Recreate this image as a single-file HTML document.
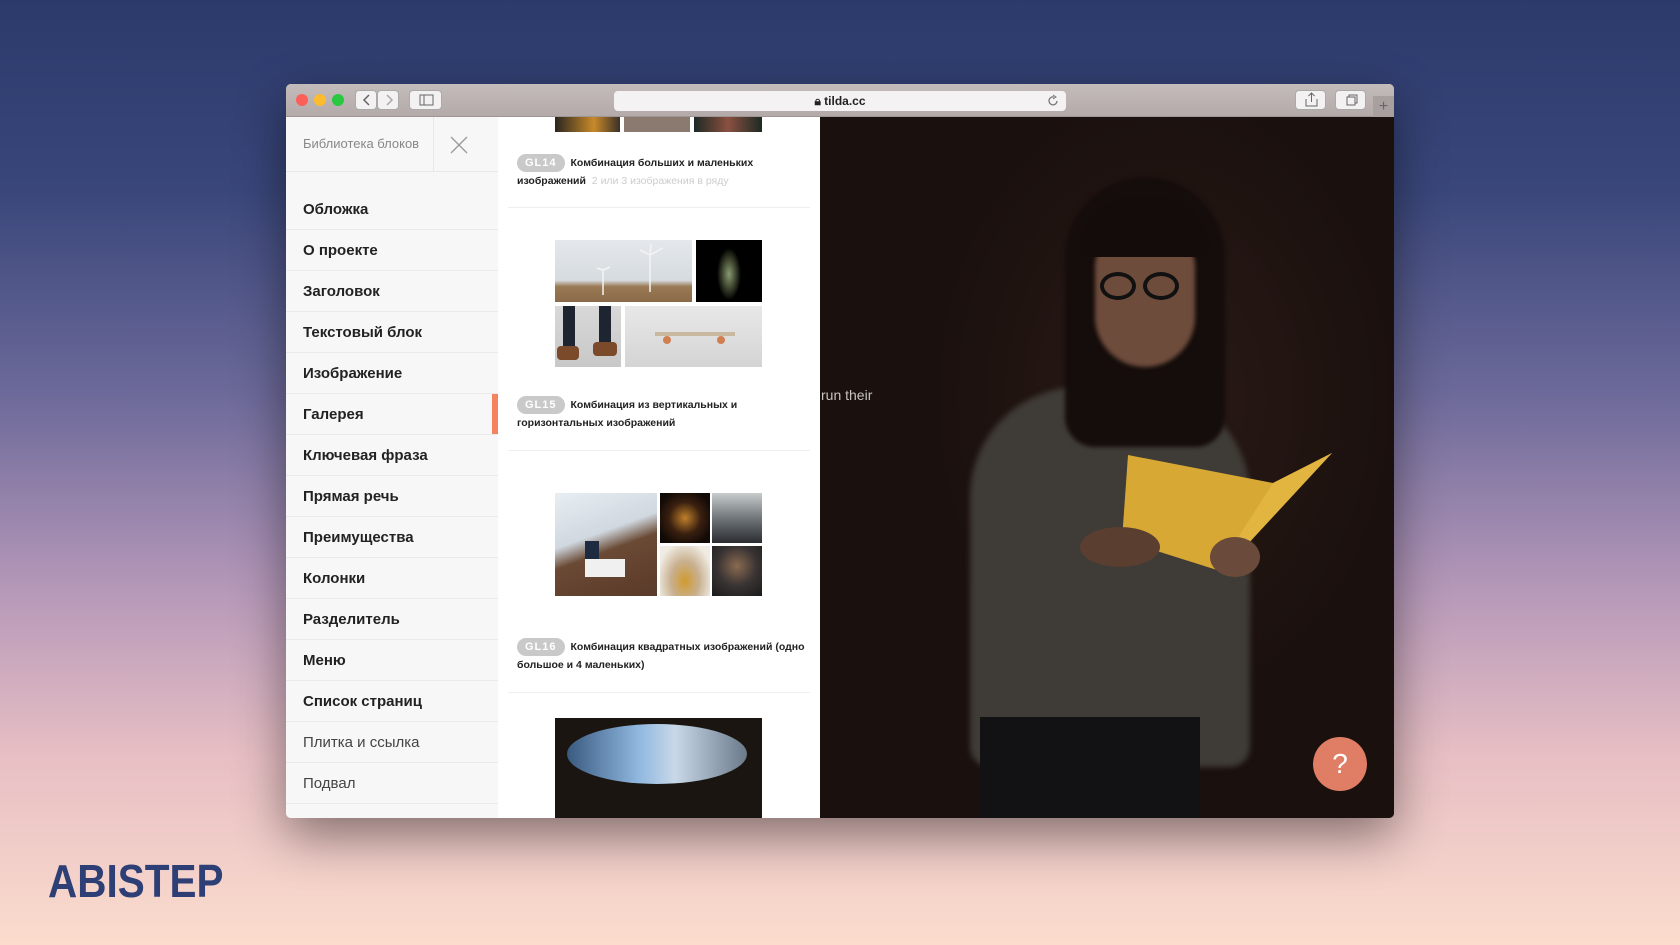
<!DOCTYPE html>
<html><head><meta charset="utf-8"><style>
*{margin:0;padding:0;box-sizing:border-box}
body{width:1680px;height:945px;overflow:hidden;position:relative;font-family:"Liberation Sans","DejaVu Sans",sans-serif;
background:linear-gradient(180deg,#2b3a6b 0%,#39467a 20%,#6d6a9a 42%,#b497b8 62%,#e7bfc4 80%,#fbdccd 100%)}
.win{position:absolute;left:286px;top:84px;width:1108px;height:734px;border-radius:5px;overflow:hidden;box-shadow:0 18px 50px rgba(0,0,0,.45);background:#fff}
.bar{position:absolute;left:0;top:0;width:1108px;height:33px;background:linear-gradient(#c4bcbb,#b3aaa9);border-bottom:1px solid #9e9695}
.dot{position:absolute;top:10px;width:12px;height:12px;border-radius:50%}
.btn{position:absolute;top:6px;height:20px;background:#f3f1f1;border-radius:4px;border:1px solid #aaa}
.url{position:absolute;left:328px;top:7px;width:452px;height:20px;background:#f4f2f2;border-radius:4px;font-size:12px;text-align:center;line-height:20px;color:#222;font-weight:bold}
.side{position:absolute;left:0;top:33px;width:212px;height:701px;background:#f7f7f7}
.sh{height:55px;border-bottom:1px solid #e8e8e8;position:relative}
.sh span{position:absolute;left:17px;top:19px;font-size:13px;color:#888}
.sh i{position:absolute;left:147px;top:0;width:1px;height:55px;background:#e8e8e8}
.menu{position:absolute;left:0;top:72px;width:212px}
.mi{height:41px;border-bottom:1px solid #eaeaea;padding-left:17px;line-height:41px;font-size:15px;font-weight:bold;color:#222;position:relative}
.mi.n{font-weight:normal;color:#444}
.mid{position:absolute;left:213px;top:33px;width:321px;height:701px;background:#fff;overflow:hidden}
.cap{position:absolute;left:18px;font-size:10.5px;font-weight:bold;color:#222;line-height:18px;width:292px}
.bd{display:inline-block;background:#c9c9c9;color:#fff;border-radius:9px;padding:0 8px;margin-right:6px;font-size:11px;letter-spacing:1px}
.hr{position:absolute;left:9px;width:302px;height:1px;background:#eee}
.im{position:absolute}
.right{position:absolute;left:534px;top:33px;width:574px;height:701px;background:#1d1210;overflow:hidden}
.logo{position:absolute;left:48px;top:856px;font-size:46px;line-height:50px;font-weight:bold;color:#2e3f75;font-family:"Liberation Sans",sans-serif;transform:scaleX(0.88);transform-origin:left top}
</style></head><body>
<div class="win">
 <div class="bar">
  <div class="dot" style="left:10px;background:#fc5f57"></div>
  <div class="dot" style="left:28px;background:#fdbc2e"></div>
  <div class="dot" style="left:46px;background:#28c840"></div>
  <div class="btn" style="left:69px;width:22px"><svg width="22" height="18"><path d="M13 4 L8 9 L13 14" stroke="#666" fill="none" stroke-width="1.5"/></svg></div>
  <div class="btn" style="left:91px;width:22px"><svg width="22" height="18"><path d="M9 4 L14 9 L9 14" stroke="#aaa" fill="none" stroke-width="1.5"/></svg></div>
  <div class="btn" style="left:123px;width:33px"><svg width="33" height="18"><rect x="10" y="4" width="13" height="10" fill="none" stroke="#666"/><line x1="14" y1="4" x2="14" y2="14" stroke="#666"/></svg></div>
  <div class="url">🔒︎ tilda.cc<svg style="position:absolute;right:6px;top:3px" width="14" height="14"><path d="M11 7 A4 4 0 1 1 8 3" stroke="#777" fill="none" stroke-width="1.3"/><path d="M7 1 L10 3 L7 5" stroke="#777" fill="none"/></svg></div>
  <div class="btn" style="left:1009px;width:31px"><svg width="31" height="18"><path d="M10 8 V15 H21 V8 M15.5 2 V11 M12.5 5 L15.5 2 L18.5 5" stroke="#666" fill="none"/></svg></div>
  <div class="btn" style="left:1049px;width:31px"><svg width="31" height="18"><rect x="11" y="6" width="8" height="8" fill="none" stroke="#666"/><path d="M13 6 V4 H21 V12 H19" stroke="#666" fill="none"/></svg></div>
  <div style="position:absolute;left:1087px;top:12px;width:21px;height:21px;background:#a8a09f;color:#666;font-size:16px;text-align:center;line-height:21px">+</div>
 </div>
 <div class="side">
  <div class="sh"><span>Библиотека блоков</span><i></i>
   <svg style="position:absolute;left:163px;top:18px" width="20" height="20"><path d="M2 2 L18 18 M18 2 L2 18" stroke="#999" stroke-width="1.3"/></svg></div>
  <div class="menu">
   <div class="mi">Обложка</div><div class="mi">О проекте</div><div class="mi">Заголовок</div><div class="mi">Текстовый блок</div><div class="mi">Изображение</div>
   <div class="mi">Галерея<span style="position:absolute;right:0;top:0;width:6px;height:40px;background:#f4845f"></span></div>
   <div class="mi">Ключевая фраза</div><div class="mi">Прямая речь</div><div class="mi">Преимущества</div><div class="mi">Колонки</div><div class="mi">Разделитель</div><div class="mi">Меню</div><div class="mi">Список страниц</div>
   <div class="mi n">Плитка и ссылка</div><div class="mi n">Подвал</div><div class="mi n">В</div>
  </div>
 </div>
 <div class="mid">
  <div class="im" style="left:56px;top:0;width:65px;height:15px;background:linear-gradient(90deg,#2a2520,#c88a2a 60%,#3a3028)"></div>
  <div class="im" style="left:125px;top:0;width:66px;height:15px;background:#8a7a70"></div>
  <div class="im" style="left:195px;top:0;width:68px;height:15px;background:linear-gradient(90deg,#1d2a24,#8a5040,#1d2a24)"></div>
  <div class="cap" style="top:37px"><span class="bd">GL14</span>Комбинация больших и маленьких изображений <span style="font-weight:normal;color:#ccc">&nbsp;2 или 3 изображения в ряду</span></div>
  <div class="hr" style="top:90px"></div>
  <div class="im" style="left:56px;top:123px;width:137px;height:62px;background:linear-gradient(180deg,#e4e8ec 0%,#d6dbe0 65%,#9a7a55 75%,#8a6a48 100%)"><svg width="137" height="62"><path d="M95 15 V52 M95 15 L108 8 M95 15 L85 10 M95 15 L96 4 M48 30 V55 M48 30 L55 27 M48 30 L42 28" stroke="#f4f4f4" stroke-width="1.5" fill="none"/></svg></div>
  <div class="im" style="left:197px;top:123px;width:66px;height:62px;background:radial-gradient(ellipse 12px 26px at 50% 55%,#8a9a70,#2a3020 70%,#000 100%)"></div>
  <div class="im" style="left:56px;top:189px;width:66px;height:61px;background:linear-gradient(180deg,#d8d8d8,#c8c8c8);"><div style="position:absolute;left:8px;top:0;width:12px;height:40px;background:#1e2430"></div><div style="position:absolute;left:44px;top:0;width:12px;height:36px;background:#1e2430"></div><div style="position:absolute;left:2px;top:40px;width:22px;height:14px;background:#7a4a2a;border-radius:4px"></div><div style="position:absolute;left:38px;top:36px;width:24px;height:14px;background:#7a4a2a;border-radius:4px"></div></div>
  <div class="im" style="left:126px;top:189px;width:137px;height:61px;background:linear-gradient(180deg,#e8e8e8,#d4d4d4)"><div style="position:absolute;left:30px;top:26px;width:80px;height:4px;background:#c8b8a0"></div><div style="position:absolute;left:38px;top:30px;width:8px;height:8px;border-radius:50%;background:#d08050"></div><div style="position:absolute;left:92px;top:30px;width:8px;height:8px;border-radius:50%;background:#d08050"></div></div>
  <div class="cap" style="top:279px"><span class="bd">GL15</span>Комбинация из вертикальных и горизонтальных изображений</div>
  <div class="hr" style="top:333px"></div>
  <div class="im" style="left:56px;top:376px;width:102px;height:103px;background:linear-gradient(160deg,#e8eef2 0%,#d0d8e0 40%,#6a4a35 55%,#5a3a28 100%)"><div style="position:absolute;left:30px;top:48px;width:14px;height:18px;background:#1e2a40"></div><div style="position:absolute;left:30px;top:66px;width:40px;height:18px;background:#f0f0f0"></div></div>
  <div class="im" style="left:161px;top:376px;width:50px;height:50px;background:radial-gradient(circle at 50% 50%,#c0802a,#3a2010 45%,#120a06 80%)"></div>
  <div class="im" style="left:213px;top:376px;width:50px;height:50px;background:linear-gradient(180deg,#c8cccc,#70767a 50%,#2a2c30)"></div>
  <div class="im" style="left:161px;top:429px;width:50px;height:50px;background:radial-gradient(ellipse at 50% 70%,#d09a30,#c8b090 40%,#f0ece4 80%)"></div>
  <div class="im" style="left:213px;top:429px;width:50px;height:50px;background:radial-gradient(circle at 50% 40%,#8a6a50,#3a3434 50%,#1a1a1a)"></div>
  <div class="cap" style="top:521px"><span class="bd">GL16</span>Комбинация квадратных изображений (одно большое и 4 маленьких)</div>
  <div class="hr" style="top:575px"></div>
  <div class="im" style="left:56px;top:601px;width:207px;height:100px;background:#1a1510;overflow:hidden"><div style="position:absolute;left:12px;top:6px;width:180px;height:60px;border-radius:50%;background:linear-gradient(90deg,#3a5a80,#90b8e0 40%,#c8d8e8 60%,#6a7a8a)"></div></div>
 </div>
 <div class="right">
  <div style="position:absolute;left:0;top:0;width:574px;height:701px;background:radial-gradient(ellipse 300px 400px at 60% 40%,#2a1a16,#1a100e 80%)"></div>
  <div style="position:absolute;left:150px;top:270px;width:280px;height:380px;background:#3f3b36;border-radius:110px 110px 20px 20px;filter:blur(3px)"></div>
  <div style="position:absolute;left:160px;top:600px;width:220px;height:110px;background:#121114"></div>
  <div style="position:absolute;left:245px;top:60px;width:160px;height:270px;background:#150d0b;border-radius:80px 80px 30px 30px;filter:blur(2px)"></div>
  <div style="position:absolute;left:275px;top:110px;width:100px;height:140px;background:#6e4c3c;border-radius:40px 40px 50px 50px;filter:blur(2px)"></div>
  <div style="position:absolute;left:260px;top:80px;width:130px;height:60px;background:#140c0a;border-radius:65px 65px 10px 10px"></div>
  <div style="position:absolute;left:280px;top:155px;width:36px;height:28px;border:4px solid #111;border-radius:50%"></div>
  <div style="position:absolute;left:323px;top:155px;width:36px;height:28px;border:4px solid #111;border-radius:50%"></div>
  <svg style="position:absolute;left:0;top:0" width="574" height="701"><polygon points="308,338 453,366 512,336 425,430 397,453 302,423" fill="#d8a834"/><polygon points="453,366 512,336 425,430 397,453" fill="#e2b440"/><ellipse cx="300" cy="430" rx="40" ry="20" fill="#5a3e30"/><ellipse cx="415" cy="440" rx="25" ry="20" fill="#6a4a3a"/></svg>
  <div style="position:absolute;left:1px;top:270px;font-size:14px;color:#c8c4c0">run their</div>
  <div style="position:absolute;left:493px;top:620px;width:54px;height:54px;border-radius:50%;background:#e07d65;color:#fff;font-size:28px;text-align:center;line-height:54px">?</div>
 </div>
</div>
<div class="logo">ABISTEP</div>
</body></html>
